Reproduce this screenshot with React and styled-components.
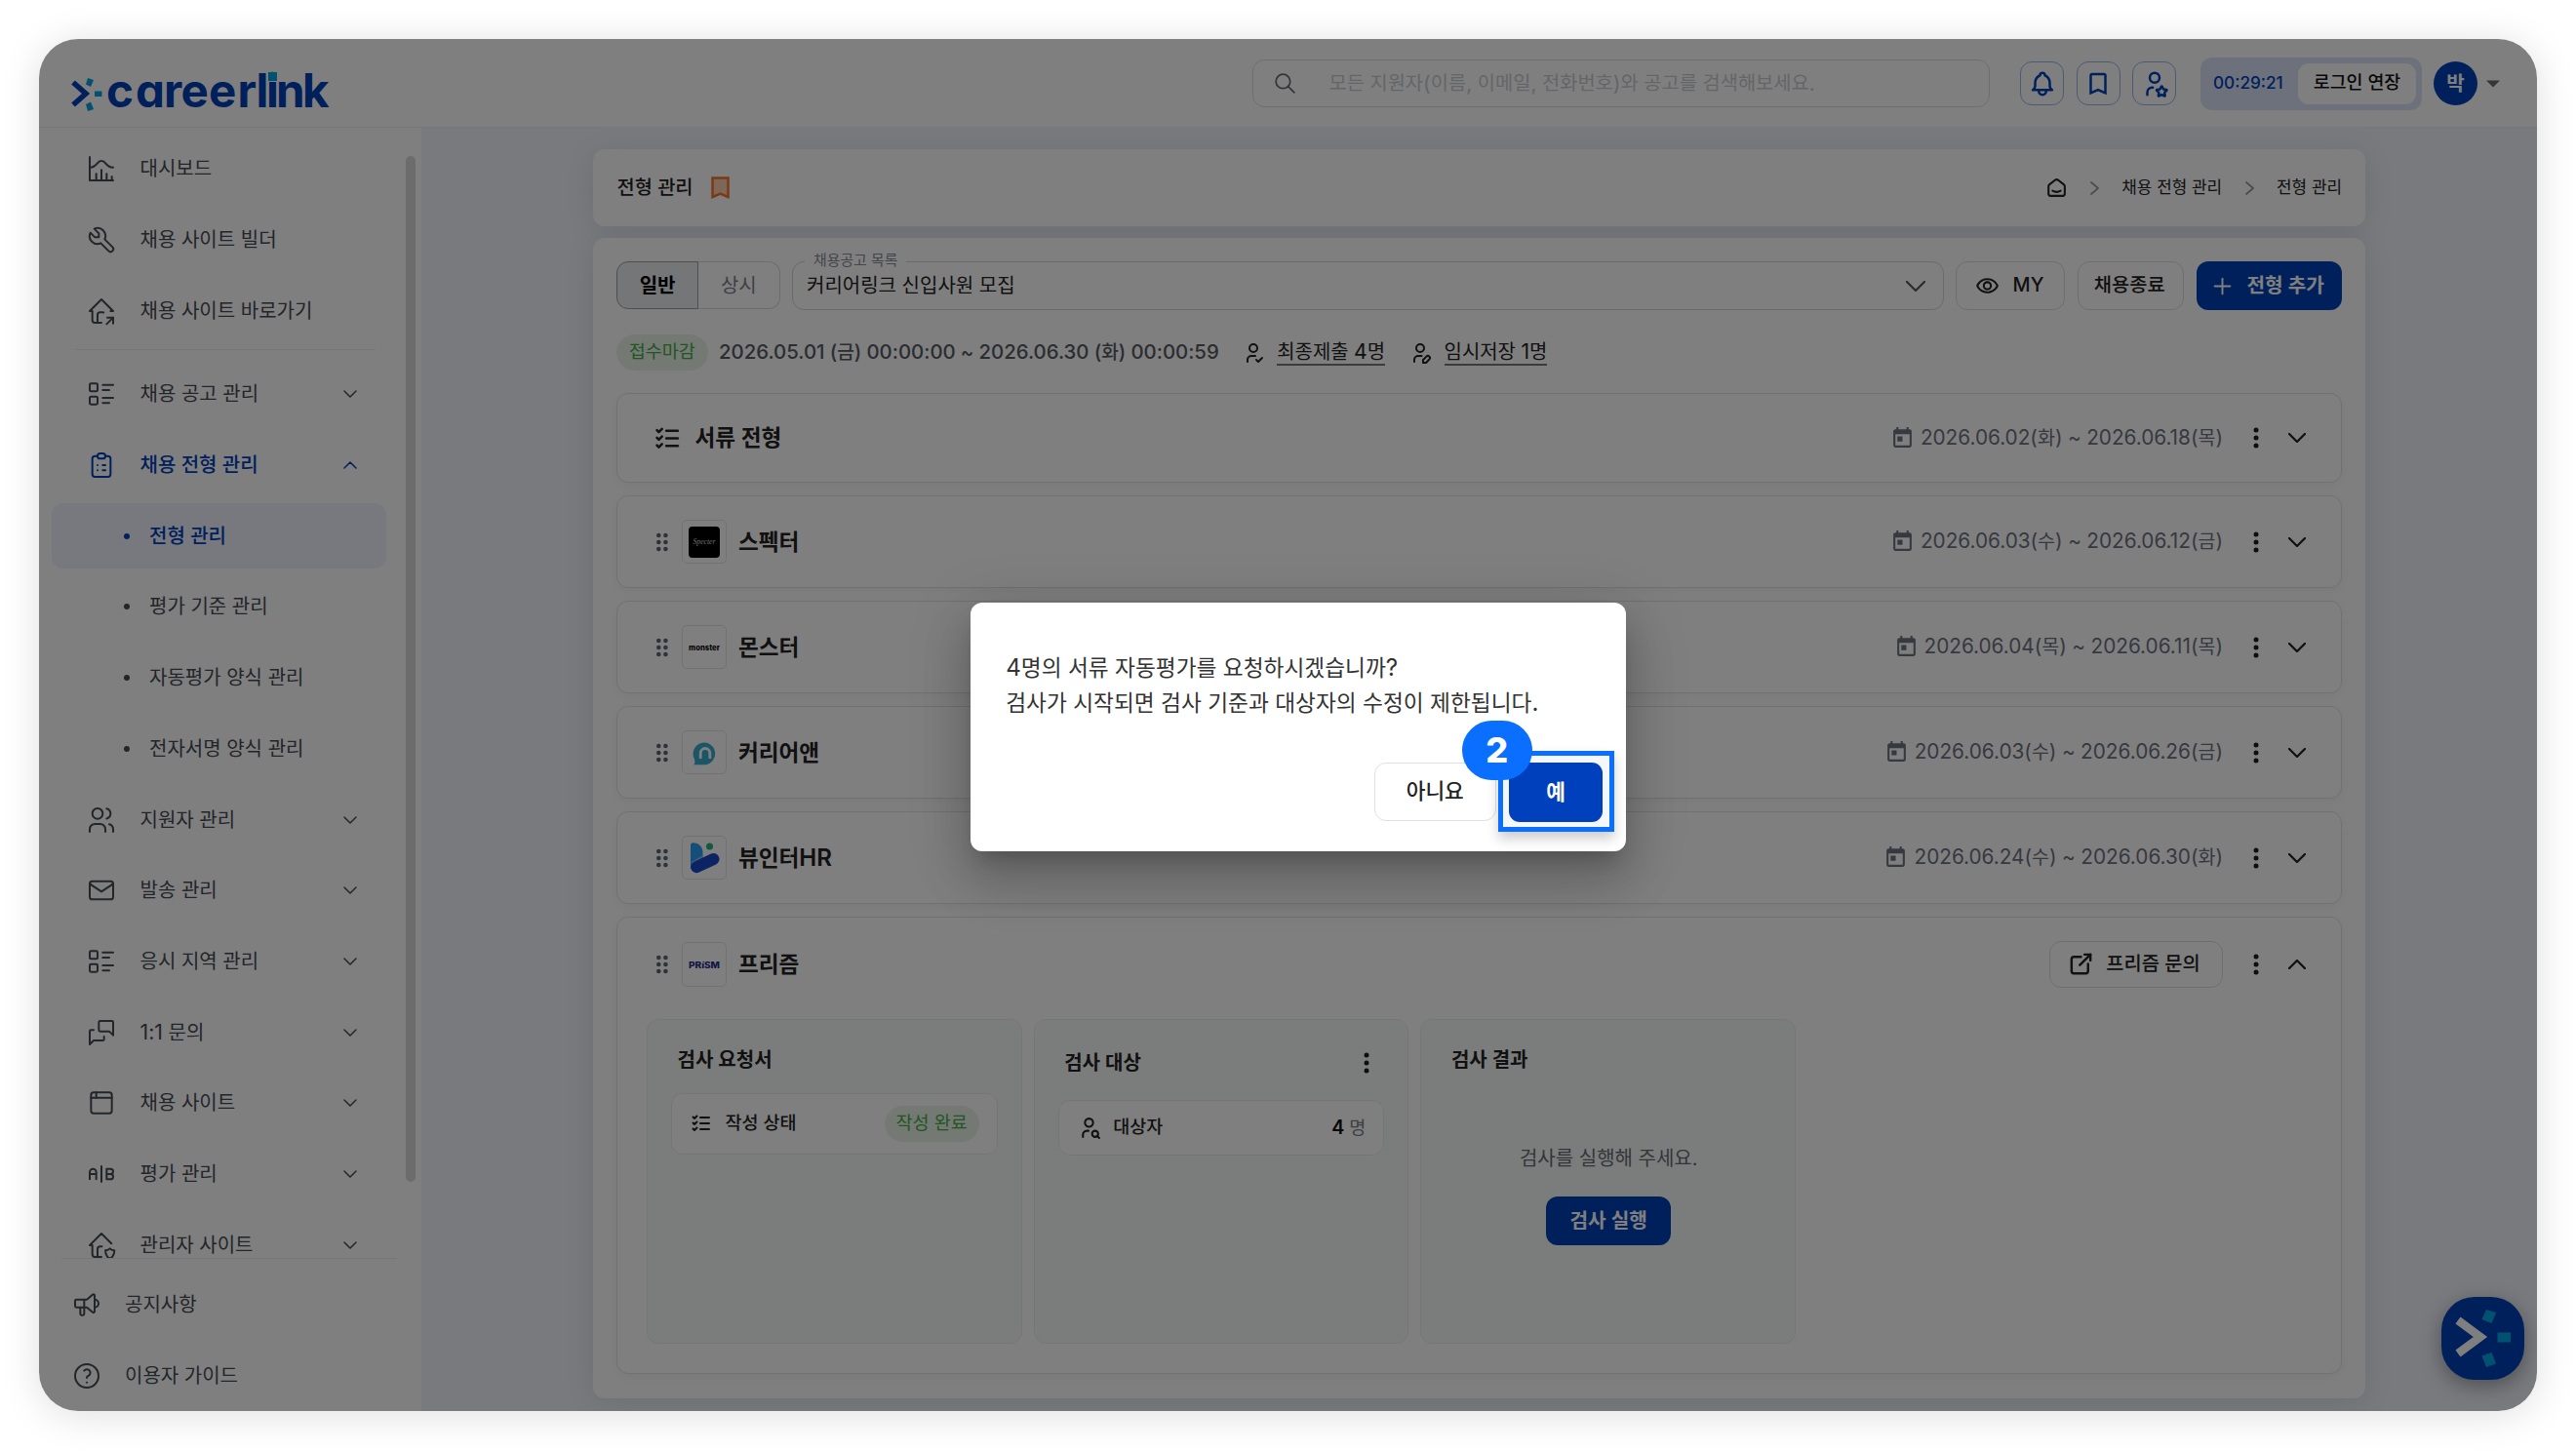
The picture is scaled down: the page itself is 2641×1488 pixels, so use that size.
import React from 'react'
import styled, { createGlobalStyle, css } from 'styled-components'
import {
    TbChartHistogram, TbTool, TbHomeShare, TbListDetails, TbClipboardList, TbUsers, TbMail,
    TbMessages, TbBrowser, TbAB, TbHomeShield, TbSpeakerphone, TbHelp, TbBell, TbUserStar,
    TbSmartHome, TbSearch, TbListCheck, TbUserCheck, TbUserEdit, TbUserSearch, TbExternalLink, TbPlus
} from 'react-icons/tb'
import { MdBookmarkBorder, MdOutlineVisibility, MdToday } from 'react-icons/md'

const menu = [
    { icon: TbChartHistogram, text: '대시보드' },
    { icon: TbTool, text: '채용 사이트 빌더' },
    { icon: TbHomeShare, text: '채용 사이트 바로가기', line: true },
    { icon: TbListDetails, text: '채용 공고 관리', arrow: 'down' },
    { icon: TbClipboardList, text: '채용 전형 관리', arrow: 'up', active: true },
    { sub: true, text: '전형 관리', active: true },
    { sub: true, text: '평가 기준 관리' },
    { sub: true, text: '자동평가 양식 관리' },
    { sub: true, text: '전자서명 양식 관리' },
    { icon: TbUsers, text: '지원자 관리', arrow: 'down' },
    { icon: TbMail, text: '발송 관리', arrow: 'down' },
    { icon: TbListDetails, text: '응시 지역 관리', arrow: 'down' },
    { icon: TbMessages, text: '1:1 문의', arrow: 'down' },
    { icon: TbBrowser, text: '채용 사이트', arrow: 'down' },
    { icon: TbAB, text: '평가 관리', arrow: 'down' },
    { icon: TbHomeShield, text: '관리자 사이트', arrow: 'down' }
]

const steps = [
    { name: '스펙터', logo: SpecterLogo, date: '2026.06.03(수) ~ 2026.06.12(금)' },
    { name: '몬스터', logo: MonsterLogo, date: '2026.06.04(목) ~ 2026.06.11(목)' },
    { name: '커리어앤', logo: CareerNLogo, date: '2026.06.03(수) ~ 2026.06.26(금)' },
    { name: '뷰인터HR', logo: ViewinterLogo, date: '2026.06.24(수) ~ 2026.06.30(화)' }
]

// latin and digits are set a bit larger than the hangul next to them
function Mix({ children }) {
    return children.split(/([0-9A-Za-z:.,~()?]+)/).map((part, idx) =>
        idx % 2 ? <Latin key={idx}>{part}</Latin> : part
    )
}

function Chevron({ dir = 'down', w = 14, h = 8, weight = 1.6 }) {
    const up = dir === 'up'
    if (dir === 'right') {
        return (
            <ChevronSvg width={w} height={h} viewBox={`0 0 ${w} ${h}`} strokeWidth={weight}>
                <path d={`M1 1L${w - 1} ${h / 2}L1 ${h - 1}`} />
            </ChevronSvg>
        )
    }
    return (
        <ChevronSvg width={w} height={h} viewBox={`0 0 ${w} ${h}`} strokeWidth={weight}>
            <path d={up ? `M1 ${h - 1}L${w / 2} 1L${w - 1} ${h - 1}` : `M1 1L${w / 2} ${h - 1}L${w - 1} 1`} />
        </ChevronSvg>
    )
}

function More() {
    return (
        <svg width="6" height="22" viewBox="0 0 6 22" fill="#1c1c1e">
            <circle cx="3" cy="3" r="2.5" />
            <circle cx="3" cy="11" r="2.5" />
            <circle cx="3" cy="19" r="2.5" />
        </svg>
    )
}

function Grip() {
    return (
        <svg width="12" height="20" viewBox="0 0 12 20" fill="#5f6470">
            {[3, 10, 17].map(y => [2.3, 9.4].map(x => <circle key={x + '-' + y} cx={x} cy={y} r="2.3" />))}
        </svg>
    )
}

function BrandLogo() {
    return (
        <BrandSvg width="270" height="60" viewBox="0 0 270 60">
            <path d="M3 18.5L16 30L3 41.5" fill="none" stroke="#0040b8" strokeWidth="5.5" />
            <path d="M18 14L24 16L21 23L16 20.500Z" fill="#00a4e0" />
            <rect x="25" y="27.500" width="7.5" height="5.5" fill="#00a4e0" />
            <path d="M21 38.500L24 46L18 48L16 41Z" fill="#00a4e0" />
            <BrandText x="37 67 96 113.500 142 171.500 190.500 201 211 238" y="44">careerlink</BrandText>
            <rect x="203" y="8" width="9" height="9" fill="#00a4e0" />
        </BrandSvg>
    )
}

function SpecterLogo() {
    return (
        <svg width="32" height="32" viewBox="0 0 32 32">
            <rect width="32" height="32" rx="4" fill="#000" />
            <ScriptText x="4.5" y="18" textLength="23" lengthAdjust="spacingAndGlyphs">Specter</ScriptText>
        </svg>
    )
}

function MonsterLogo() {
    return (
        <svg width="32" height="32" viewBox="0 0 32 32">
            <TinyText x="0" y="18.5" textLength="32" lengthAdjust="spacingAndGlyphs" $size="8px">monster</TinyText>
        </svg>
    )
}

function CareerNLogo() {
    return (
        <svg width="32" height="32" viewBox="0 0 32 32">
            <path d="M5 28.2C7 26.5 6.5 25 5.8 22A11.3 11.3 0 1 1 17 28.2Z" fill="#38aacb" />
            <path d="M12.2 22V16.3a4.8 4.8 0 0 1 9.6 0V22" fill="none" stroke="#fff" strokeWidth="2.8" />
        </svg>
    )
}

function ViewinterLogo() {
    return (
        <svg width="32" height="32" viewBox="0 0 32 32">
            <path d="M2 3C2 .8 3.5 .2 6 .4C11.500 .9 14.500 5 14.500 10.500V22L2 27Z" fill="#2b9cf0" />
            <path d="M3 20L14.500 13V22L5 28Z" fill="#7cc0f2" />
            <path d="M8.200 25.200L25.500 17" stroke="#1849c6" strokeWidth="12" strokeLinecap="round" />
            <circle cx="21.500" cy="4" r="3.500" fill="#27b27c" />
        </svg>
    )
}

function PrismLogo() {
    return (
        <svg width="32" height="32" viewBox="0 0 32 32">
            <TinyText x="0" y="19.500" textLength="32" lengthAdjust="spacingAndGlyphs" $size="8.5px" $fill="#2a2c8c">PRíSM</TinyText>
        </svg>
    )
}

function Header() {
    return (
        <TopBar>
            <BrandLogo />
            <TopRight>
                <SearchBox>
                    <TbSearch size={25} />
                    <Mix>모든 지원자(이름, 이메일, 전화번호)와 공고를 검색해보세요.</Mix>
                </SearchBox>
                <IconButtons>
                    <IconButton><TbBell /></IconButton>
                    <IconButton><MdBookmarkBorder /></IconButton>
                    <IconButton><TbUserStar /></IconButton>
                </IconButtons>
                <Timer>
                    <TimeLeft>00:29:21</TimeLeft>
                    <Extend>로그인 연장</Extend>
                </Timer>
                <Avatar>박</Avatar>
                <Caret width="14" height="8" viewBox="0 0 14 8"><path d="M0 0.500H14L7 7.500Z" /></Caret>
            </TopRight>
        </TopBar>
    )
}

function Sidebar() {
    return (
        <Side>
            <MenuArea>
                <Menu>
                    {menu.map((item, idx) => {
                        if (item.sub) {
                            return (
                                <SubItem key={idx} $active={item.active}>
                                    <Bullet />{item.text}
                                </SubItem>
                            )
                        }
                        const Icon = item.icon
                        return (
                            <React.Fragment key={idx}>
                                <MenuItem $active={item.active}>
                                    <Icon size={32} />
                                    <MenuText><Mix>{item.text}</Mix></MenuText>
                                    {item.arrow && <Chevron dir={item.arrow} />}
                                </MenuItem>
                                {item.line && <MenuLine />}
                            </React.Fragment>
                        )
                    })}
                </Menu>
                <ScrollThumb />
            </MenuArea>
            <SideFooter>
                <FootItem><TbSpeakerphone size={32} />공지사항</FootItem>
                <FootItem><TbHelp size={32} />이용자 가이드</FootItem>
            </SideFooter>
        </Side>
    )
}

function Toolbar() {
    return (
        <ToolRow>
            <Tabs>
                <Tab $on>일반</Tab>
                <Tab>상시</Tab>
            </Tabs>
            <Select>
                <SelectLabel>채용공고 목록</SelectLabel>
                <span>커리어링크 신입사원 모집</span>
                <Chevron w={20} h={11} weight={2.2} />
            </Select>
            <OutlineButton $w="112px"><MdOutlineVisibility size={25} /><span>MY</span></OutlineButton>
            <OutlineButton $w="109.500px">채용종료</OutlineButton>
            <PrimaryButton $w="149.500px" $gap="12px"><TbPlus size={27} />전형 추가</PrimaryButton>
        </ToolRow>
    )
}

function Status() {
    return (
        <StatusRow>
            <Chip>접수마감</Chip>
            <Period><Mix>2026.05.01 (금) 00:00:00 ~ 2026.06.30 (화) 00:00:59</Mix></Period>
            <Count><TbUserCheck size={24} /><u><Mix>최종제출 4명</Mix></u></Count>
            <Count><TbUserEdit size={24} /><u><Mix>임시저장 1명</Mix></u></Count>
        </StatusRow>
    )
}

function StepDate({ children }) {
    return <DateText><MdToday size={25} /><span><Mix>{children}</Mix></span></DateText>
}

function PrismStep() {
    return (
        <StepCard>
            <StepHead $tall>
                <Grip />
                <LogoBox><PrismLogo /></LogoBox>
                <StepName>프리즘</StepName>
                <OutlineButton $w="178.500px" $h="48px" $gap="11.500px" $shift="5px">
                    <TbExternalLink size={29} />프리즘 문의
                </OutlineButton>
                <StepTools><More /><Chevron dir="up" w={18} h={10} weight={2.3} /></StepTools>
            </StepHead>
            <Panels>
                <Panel>
                    <PanelHead>검사 요청서</PanelHead>
                    <InfoBox $h="63px">
                        <TbListCheck size={24} />
                        <InfoText>작성 상태</InfoText>
                        <Chip $small>작성 완료</Chip>
                    </InfoBox>
                </Panel>
                <Panel>
                    <PanelHead $tall>검사 대상<More /></PanelHead>
                    <InfoBox $h="57px">
                        <TbUserSearch size={25} />
                        <InfoText>대상자</InfoText>
                        <People><b>4</b>명</People>
                    </InfoBox>
                </Panel>
                <Panel>
                    <PanelHead>검사 결과</PanelHead>
                    <Empty>
                        <span>검사를 실행해 주세요.</span>
                        <PrimaryButton $w="127.500px">검사 실행</PrimaryButton>
                    </Empty>
                </Panel>
            </Panels>
        </StepCard>
    )
}

function Content() {
    return (
        <Main>
            <TitleCard>
                <Title>전형 관리</Title>
                <MarkIcon width="19" height="23" viewBox="0 0 19 23">
                    <path d="M1.500 1.500H17.500V21L9.500 17.500L1.500 21Z" />
                </MarkIcon>
                <Crumbs>
                    <TbSmartHome size={25} />
                    <Chevron dir="right" w={9} h={14} weight={1.8} />
                    <span>채용 전형 관리</span>
                    <Chevron dir="right" w={9} h={14} weight={1.8} />
                    <span>전형 관리</span>
                </Crumbs>
            </TitleCard>
            <Board>
                <Toolbar />
                <Status />
                <Steps>
                    <StepCard>
                        <StepHead $short>
                            <TbListCheck size={31} />
                            <StepName>서류 전형</StepName>
                            <StepDate>2026.06.02(화) ~ 2026.06.18(목)</StepDate>
                            <StepTools><More /><Chevron w={18} h={10} weight={2.3} /></StepTools>
                        </StepHead>
                    </StepCard>
                    {steps.map(step => {
                        const Logo = step.logo
                        return (
                            <StepCard key={step.name}>
                                <StepHead>
                                    <Grip />
                                    <LogoBox><Logo /></LogoBox>
                                    <StepName><Mix>{step.name}</Mix></StepName>
                                    <StepDate>{step.date}</StepDate>
                                    <StepTools><More /><Chevron w={18} h={10} weight={2.3} /></StepTools>
                                </StepHead>
                            </StepCard>
                        )
                    })}
                    <PrismStep />
                </Steps>
            </Board>
        </Main>
    )
}

function Confirm() {
    return (
        <Dialog>
            <Message>
                <Mix>4명의 서류 자동평가를 요청하시겠습니까?</Mix><br />
                <Mix>검사가 시작되면 검사 기준과 대상자의 수정이 제한됩니다.</Mix>
            </Message>
            <Actions>
                <NoButton>아니요</NoButton>
                <YesWrap>
                    <Highlight />
                    <YesButton>예</YesButton>
                    <StepBadge>2</StepBadge>
                </YesWrap>
            </Actions>
        </Dialog>
    )
}

function App() {
    return (
        <Page>
            <Global />
            <Window>
                <Header />
                <Body>
                    <Sidebar />
                    <Content />
                </Body>
                <Fab>
                    <svg width="85" height="85" viewBox="0 0 85 85">
                        <path d="M17 24L40 41L17 58" fill="none" stroke="#fff" strokeWidth="8.500" />
                        <path d="M46 13L56 16L51.500 27L41.500 23Z" fill="#00a4e0" />
                        <rect x="57.500" y="36.500" width="13.500" height="10" fill="#00a4e0" />
                        <path d="M41.500 60.500L51.500 57L56 68.500L46 72Z" fill="#00a4e0" />
                    </svg>
                </Fab>
                <Dim>
                    <Confirm />
                </Dim>
            </Window>
        </Page>
    )
}

export default App

const Global = createGlobalStyle`
* { box-sizing: border-box; }
body {
margin: 0;
background: #fff;
font-family: Inter, 'Noto Sans CJK KR', sans-serif;
font-size: 20px;
line-height: 1.4;
color: #222;
}
svg { flex-shrink: 0; display: block; }
`

const Page = styled.div`
width: 2641px;
height: 1488px;
padding: 40px;
overflow: hidden;
`
const Window = styled.div`
position: relative;
display: flex;
flex-direction: column;
width: 2561px;
height: 1407px;
border-radius: 40px;
overflow: hidden;
background: #fff;
box-shadow: 0 4px 40px rgba(0, 0, 0, 0.13);
`
const Latin = styled.span`
font-size: 1.065em;
line-height: 0;
`
const ChevronSvg = styled.svg`
fill: none;
stroke: currentColor;
stroke-linecap: round;
stroke-linejoin: round;
`
const BrandSvg = styled.svg`
margin-top: 21px;
overflow: visible;
`
const BrandText = styled.text`
font-family: Inter, sans-serif;
font-size: 47.500px;
font-weight: 700;
font-feature-settings: 'cv11';
fill: #0040b8;
`
const ScriptText = styled.text`
font-family: 'Liberation Serif', serif;
font-style: italic;
font-size: 8px;
fill: #ddd;
`
const TinyText = styled.text`
font-family: Inter, sans-serif;
font-weight: 800;
font-size: ${props => props.$size};
fill: ${props => props.$fill || '#111'};
`

// header
const TopBar = styled.header`
display: flex;
align-items: center;
justify-content: space-between;
flex-shrink: 0;
height: 91px;
padding: 0 38px 0 32px;
border-bottom: 1px solid #f0f0f2;
`
const TopRight = styled.div`
display: flex;
align-items: center;
margin-top: 1px;
`
const SearchBox = styled.div`
display: flex;
align-items: center;
width: 756px;
height: 49px;
padding-left: 20px;
border: 1.5px solid #dcdcdf;
border-radius: 12px;
color: #c9cbd0;
white-space: pre;
font-size: 19.8px;
svg {
color: #666b78;
stroke-width: 1.7;
margin-right: 33px;
}
`
const IconButtons = styled.div`
display: flex;
gap: 12.5px;
margin: 0 25px 0 31.5px;
`
const IconButton = styled.div`
display: flex;
align-items: center;
justify-content: center;
width: 45px;
height: 45px;
border: 1.5px solid #99b3e6;
border-radius: 12px;
color: #0040b8;
font-size: 30px;
`
const Timer = styled.div`
display: flex;
align-items: center;
justify-content: space-between;
width: 227px;
height: 54px;
padding: 0 6px 0 13px;
border-radius: 12px;
background: #dbe3f6;
`
const TimeLeft = styled.span`
font-size: 17.2px;
font-weight: 500;
color: #0040b8;
`
const Extend = styled.span`
display: flex;
align-items: center;
justify-content: center;
width: 121px;
height: 42px;
border-radius: 11px;
background: #fff;
font-size: 18.4px;
font-weight: 500;
color: #111;
padding-bottom: 2px;
`
const Avatar = styled.div`
display: flex;
align-items: center;
justify-content: center;
width: 45px;
height: 45px;
margin-left: 12px;
border-radius: 50%;
background: #0040b8;
color: #fff;
font-weight: 600;
`
const Caret = styled.svg`
margin-left: 9px;
fill: #6c6c70;
`

// sidebar
const Body = styled.div`
display: flex;
flex: 1;
min-height: 0;
`
const Side = styled.aside`
display: flex;
flex-direction: column;
flex-shrink: 0;
width: 392px;
background: #fff;
color: #454b52;
`
const MenuArea = styled.div`
display: flex;
height: 1162px;
overflow: hidden;
`
const Menu = styled.div`
display: flex;
flex-direction: column;
flex-shrink: 0;
width: 376px;
padding: 6px 20px 0 13px;
`
const itemBase = css`
display: flex;
flex-shrink: 0;
align-items: center;
height: 72.7px;
color: ${props => props.$active ? '#0040b8' : 'inherit'};
font-weight: ${props => props.$active ? 500 : 400};
`
const MenuItem = styled.div`
${itemBase}
padding: 0 30px 0 35px;
svg { stroke-width: 1.5; }
`
const MenuText = styled.span`
flex: 1;
margin-left: 23.5px;
`
const MenuLine = styled.div`
flex-shrink: 0;
height: 1px;
margin: 3px 11px 9px 24px;
background: #ececee;
`
const SubItem = styled.div`
${itemBase}
height: 66.700px;
margin: 3px 0;
padding-left: 74px;
border-radius: 12px;
background: ${props => props.$active ? '#f1f3fc' : 'transparent'};
`
const Bullet = styled.i`
width: 6px;
height: 6px;
margin-right: 20px;
border-radius: 50%;
background: currentColor;
`
const ScrollThumb = styled.div`
width: 9.500px;
height: 1052px;
margin-top: 29px;
border-radius: 5px;
background: #d9d9d9;
`
const SideFooter = styled.div`
flex: 1;
margin: 0 25px 0 22.5px;
padding-top: 11px;
border-top: 1px solid #ececee;
`
const FootItem = styled.div`
display: flex;
align-items: center;
gap: 23px;
height: 72.700px;
padding-left: 10.500px;
svg { stroke-width: 1.5; }
`

// content
const Main = styled.main`
flex: 1;
padding: 21.500px 176px 14px 175.500px;
background: #f2f4fb;
`
const cardBase = css`
border-radius: 12px;
background: #fff;
box-shadow: 0 4px 28px rgba(70, 75, 105, 0.13);
`
const TitleCard = styled.div`
${cardBase}
display: flex;
align-items: center;
height: 79px;
padding: 1px 24px 0 25px;
`
const Title = styled.div`
font-weight: 500;
font-size: 19.800px;
`
const MarkIcon = styled.svg`
margin-left: 18px;
fill: #ffcfb0;
stroke: #f2762e;
stroke-width: 2.500;
`
const Crumbs = styled.div`
display: flex;
align-items: center;
gap: 23.500px;
margin-left: auto;
font-size: 16.900px;
${ChevronSvg} { color: #969aa5; }
svg:first-child { margin-right: -2px; }
`
const Board = styled.section`
${cardBase}
height: 1190px;
margin-top: 12px;
padding: 24.500px 24px 0 24.500px;
`
const ToolRow = styled.div`
display: flex;
gap: 12.500px;
height: 50px;
`
const Tabs = styled.div`
display: flex;
width: 167.500px;
height: 49px;
`
const Tab = styled.div`
display: flex;
flex: 1;
align-items: center;
justify-content: center;
border: 1.500px solid ${props => props.$on ? '#9b9da1' : '#d8d8da'};
border-left-width: ${props => props.$on ? '1.500px' : 0};
border-radius: ${props => props.$on ? '12px 0 0 12px' : '0 12px 12px 0'};
background: ${props => props.$on ? '#e9ecf0' : '#fff'};
color: ${props => props.$on ? '#000' : '#7b828c'};
font-weight: ${props => props.$on ? 600 : 400};
`
const Select = styled.div`
position: relative;
display: flex;
flex: 1;
align-items: center;
justify-content: space-between;
height: 50px;
padding: 0 18px 0 14px;
border: 1.500px solid #d4d4d7;
border-radius: 12px;
svg { color: #55585e; }
`
const SelectLabel = styled.span`
position: absolute;
left: 12px;
top: -12px;
padding: 0 9px;
background: #fff;
font-size: 14.900px;
color: #858c95;
`
const buttonBase = css`
display: flex;
align-items: center;
justify-content: center;
flex-shrink: 0;
gap: ${props => props.$gap || '14px'};
width: ${props => props.$w};
height: ${props => props.$h || '50px'};
border-radius: 12px;
`
const OutlineButton = styled.div`
${buttonBase}
padding-right: ${props => props.$shift || '2px'};
border: 1.500px solid #dcdcdf;
background: #fff;
font-size: 19.800px;
font-weight: 500;
`
const PrimaryButton = styled.div`
${buttonBase}
background: #0040b8;
color: #fff;
font-size: 20.200px;
font-weight: 600;
svg {
stroke-width: 1.700;
margin-left: -5px;
}
`
const StatusRow = styled.div`
display: flex;
align-items: center;
height: 37px;
margin-top: 24.500px;
`
const Chip = styled.span`
display: flex;
align-items: center;
justify-content: center;
width: ${props => props.$small ? '97px' : '93.500px'};
height: 37px;
border-radius: 19px;
background: #e8f3e8;
color: #45ab47;
font-size: 18.500px;
`
const Period = styled.span`
margin: 1px 23px 0 11.500px;
font-size: 19.150px;
font-weight: 500;
color: #565b63;
`
const Count = styled.span`
display: flex;
align-items: center;
margin: 1px 24px 0 0;
white-space: nowrap;
svg { margin-right: 12.500px; }
u {
line-height: 24px;
border-bottom: 2px solid #77787a;
text-decoration: none;
font-size: 19.900px;
}
`
const Steps = styled.div`
display: flex;
flex-direction: column;
gap: 12.600px;
margin-top: 23.500px;
`
const StepCard = styled.div`
border: 1px solid #e3e3e6;
border-radius: 12px;
background: #fff;
box-shadow: 0 3px 12px rgba(0, 0, 0, 0.05);
`
const StepHead = styled.div`
display: flex;
align-items: center;
height: ${props => props.$short ? '90.400px' : props.$tall ? '96px' : '93.400px'};
padding: 0 36px 0 ${props => props.$short ? '36px' : '39.500px'};
`
const LogoBox = styled.div`
display: flex;
align-items: center;
justify-content: center;
width: 45.500px;
height: 45.500px;
margin-left: 14.500px;
border: 1.500px solid #e4e4e6;
border-radius: 5px;
`
const StepName = styled.div`
flex: 1;
margin-left: 12.500px;
font-size: 22.600px;
font-weight: 600;
`
const DateText = styled.div`
display: flex;
align-items: center;
gap: 6px;
font-size: 19.500px;
color: #6c727e;
`
const StepTools = styled.div`
display: flex;
align-items: center;
gap: 30.500px;
margin-left: 30.500px;
`
const Panels = styled.div`
display: flex;
gap: 12px;
padding: 8px 30px 30.500px;
`
const Panel = styled.div`
display: flex;
flex-direction: column;
width: 384.700px;
height: 333px;
padding: 19px 24px 19px 24px;
border: 1.500px solid #ededed;
border-radius: 12px;
background: #f7faf8;
`
const PanelHead = styled.div`
display: flex;
align-items: center;
justify-content: space-between;
height: ${props => props.$tall ? '51px' : '44px'};
padding: 0 15px 0 6.500px;
font-weight: 600;
flex-shrink: 0;
`
const InfoBox = styled.div`
display: flex;
align-items: center;
height: ${props => props.$h};
margin-top: 12px;
padding: 0 18px;
border: 1.500px solid #e9ebea;
border-radius: 12px;
background: #fff;
`
const InfoText = styled.span`
flex: 1;
margin-left: 12.500px;
font-size: 18.500px;
font-weight: 500;
`
const People = styled.span`
font-size: 18.500px;
color: #7b7e84;
b {
margin-right: 5px;
font-size: 19.600px;
font-weight: 600;
color: #111;
}
`
const Empty = styled.div`
display: flex;
flex: 1;
flex-direction: column;
align-items: center;
gap: 25px;
padding: 65px 0 0 1px;
color: #666b73;
`
const Fab = styled.div`
position: absolute;
right: 13.500px;
bottom: 32px;
width: 85px;
height: 85px;
border-radius: 34px;
background: #0040b8;
box-shadow: 0 6px 20px rgba(0, 0, 0, 0.35);
`

// confirm dialog
const Dim = styled.div`
position: absolute;
inset: 0;
display: flex;
align-items: center;
justify-content: center;
padding: 4px 0 0 21.500px;
background: rgba(0, 0, 0, 0.5);
`
const Dialog = styled.div`
display: flex;
flex-direction: column;
justify-content: space-between;
width: 672px;
height: 255px;
padding: 49px 24px 30px 36px;
border-radius: 12px;
background: #fff;
box-shadow: 0 15px 20px -9px rgba(0, 0, 0, 0.2), 0 32px 50px 4px rgba(0, 0, 0, 0.14), 0 12px 60px 10px rgba(0, 0, 0, 0.12);
`
const Message = styled.div`
font-size: 22.700px;
line-height: 36px;
color: #333;
`
const Actions = styled.div`
display: flex;
justify-content: flex-end;
gap: 13px;
`
const NoButton = styled.div`
display: flex;
align-items: center;
justify-content: center;
width: 125px;
height: 60px;
border: 1.500px solid #dfe0e6;
border-radius: 12px;
font-size: 21.400px;
font-weight: 500;
`
const YesWrap = styled.div`
position: relative;
`
const YesButton = styled.div`
position: relative;
display: flex;
align-items: center;
justify-content: center;
width: 96.500px;
height: 61px;
border-radius: 11px;
background: #0040bc;
color: #fff;
font-size: 21.400px;
font-weight: 600;
`
const Highlight = styled.div`
position: absolute;
left: -11px;
top: -12px;
width: 119px;
height: 83px;
border: 5px solid #0a6eff;
background: #f4f7fe;
box-shadow: 0 7px 12px rgba(0, 0, 0, 0.2);
`
const StepBadge = styled.div`
position: absolute;
left: -48px;
top: -43px;
display: flex;
align-items: center;
justify-content: center;
width: 72px;
height: 61px;
border-radius: 31px;
background: #0a6eff;
color: #fff;
font-size: 36px;
font-weight: 800;
`
